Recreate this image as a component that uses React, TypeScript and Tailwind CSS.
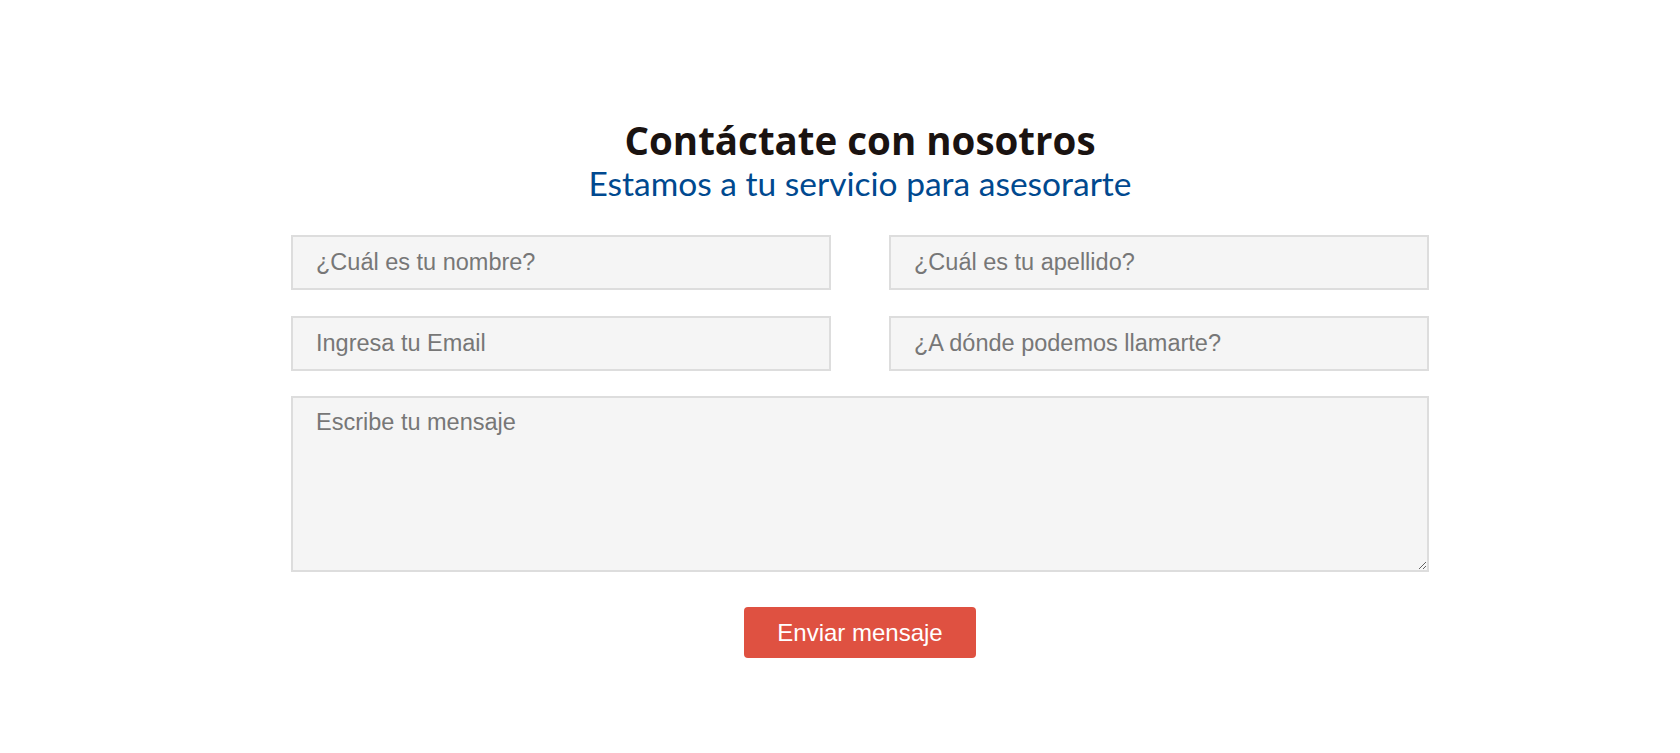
import React from "react";

export default function App() {
  const inputCls =
    "h-[55px] w-full bg-[#f5f5f5] border-2 border-[#dddddd] pl-[23px] pr-4 text-[23.5px] text-[#555] placeholder:text-[#777] outline-none font-['Liberation_Sans',Arial,sans-serif]";
  return (
    <div className="min-h-[753px] w-full bg-white pl-[40px]">
      <div className="mx-auto w-[1138px] pt-[118px]">
        <div className="flex flex-col items-center">
          <h1 className="text-[38.5px] leading-[45px] font-bold text-[#1a1311] font-['Open_Sans',sans-serif]">
            Contáctate con nosotros
          </h1>
          <p className="text-[33.5px] leading-[40px] text-[#00498f] font-['Lato',sans-serif]">
            Estamos a tu servicio para asesorarte
          </p>
        </div>
        <form
          className="mt-[32px] flex flex-col"
          onSubmit={(e) => e.preventDefault()}
        >
          <div className="grid grid-cols-2 gap-x-[58px] gap-y-[26px]">
            <input className={inputCls} placeholder="¿Cuál es tu nombre?" />
            <input className={inputCls} placeholder="¿Cuál es tu apellido?" />
            <input className={inputCls} placeholder="Ingresa tu Email" />
            <input className={inputCls} placeholder="¿A dónde podemos llamarte?" />
          </div>
          <textarea
            className="mt-[25px] h-[176px] w-full bg-[#f5f5f5] border-2 border-[#dddddd] pl-[23px] pr-4 pt-[10px] text-[23.5px] leading-[28px] text-[#555] placeholder:text-[#777] outline-none font-['Liberation_Sans',Arial,sans-serif]"
            placeholder="Escribe tu mensaje"
          />
          <div className="mt-[35px] flex justify-center">
            <button
              type="submit"
              className="h-[51px] w-[232px] rounded-[4px] bg-[#df5141] text-white text-[24px] font-['Liberation_Sans',Arial,sans-serif]"
            >
              Enviar mensaje
            </button>
          </div>
        </form>
      </div>
    </div>
  );
}
